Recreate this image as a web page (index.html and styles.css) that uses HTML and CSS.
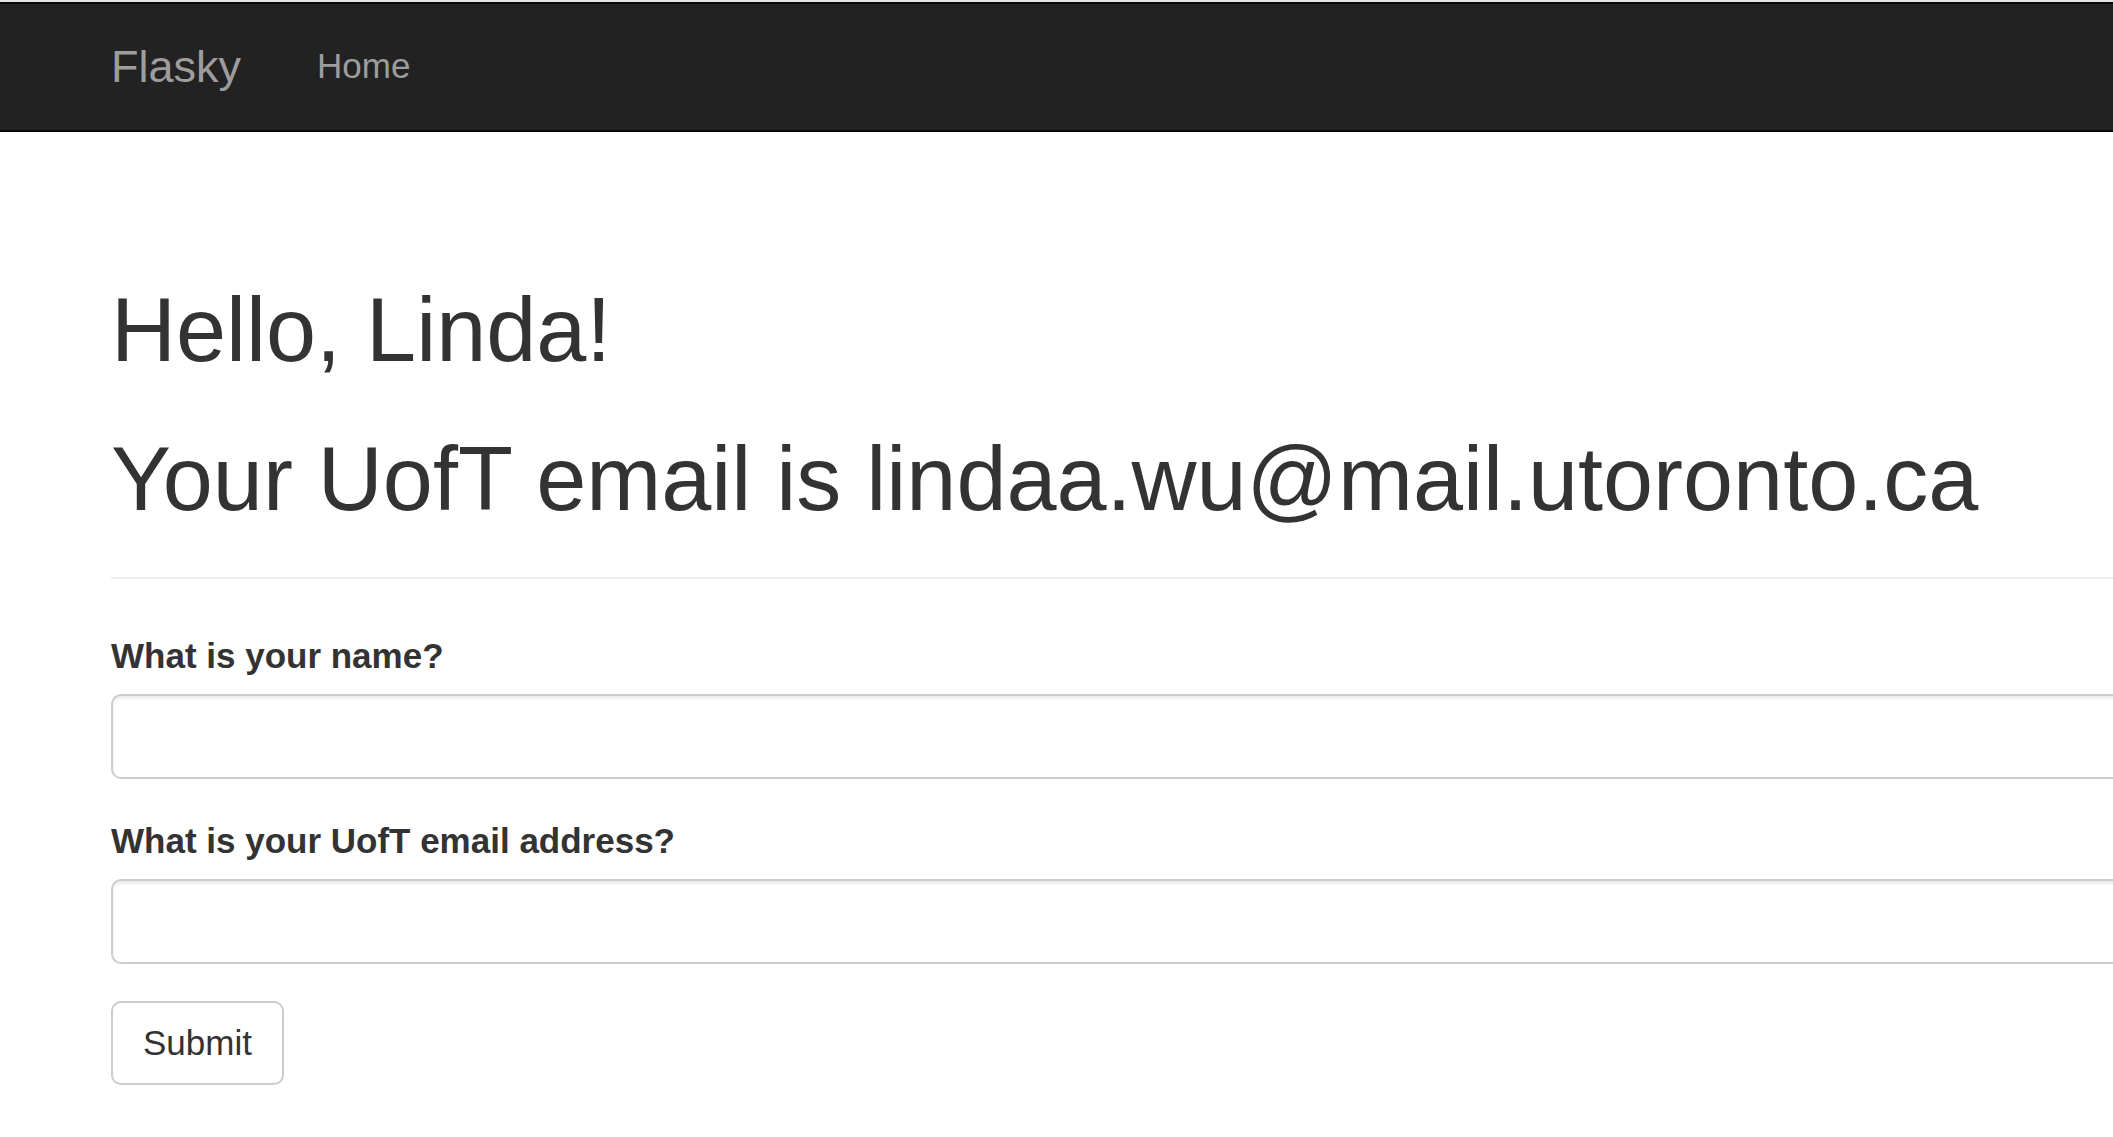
FILE: index.html
```html
<!DOCTYPE html>
<html lang="en">
<head>
<meta charset="utf-8">
<title>Flasky</title>
<link rel="stylesheet" href="styles.css">
</head>
<body>
<nav class="navbar">
  <a class="brand" href="#">Flasky</a>
  <a class="nav-link" href="#">Home</a>
</nav>
<main class="container">
  <div class="content">
    <div class="page-header">
      <h1 class="title">Hello, Linda!</h1>
      <h1 class="title second">Your UofT email is lindaa.wu@mail.utoronto.ca</h1>
    </div>
    <form class="form">
      <div class="form-group">
        <label class="label" for="name">What is your name?</label>
        <input class="input" id="name" type="text">
      </div>
      <div class="form-group">
        <label class="label" for="email">What is your UofT email address?</label>
        <input class="input" id="email" type="text">
      </div>
      <button class="btn" type="button">Submit</button>
    </form>
  </div>
</main>
</body>
</html>
```

FILE: styles.css
```css
html, body {
  margin: 0;
  padding: 0;
  overflow: hidden;
}
body {
  border-top: 2px solid #e4e4e4;
  background: #fff;
  font-family: "Liberation Sans", Arial, sans-serif;
  color: #333;
}
.navbar {
  display: flex;
  align-items: flex-start;
  height: 126px;
  background: #222;
  border-top: 2px solid #080808;
  border-bottom: 2px solid #080808;
  padding-left: 111px;
}
.brand {
  font-size: 45px;
  line-height: 126px;
  height: 126px;
  color: #9d9d9d;
  text-decoration: none;
}
.nav-link {
  margin-left: 76px;
  font-size: 35px;
  line-height: 124px;
  height: 126px;
  color: #9d9d9d;
  text-decoration: none;
}
.container {
  padding-left: 111px;
  overflow: hidden;
}
.content {
  width: 2200px;
}
.page-header {
  margin-top: 149px;
  padding-bottom: 48px;
  border-bottom: 2px solid #eee;
}
.title {
  margin: 0;
  font-size: 90px;
  line-height: 99px;
  font-weight: normal;
  color: #333;
}
.second {
  margin-top: 50px;
}
.form {
  padding-top: 52px;
}
.form-group {
  margin-bottom: 37px;
}
.label {
  display: block;
  font-size: 35px;
  line-height: 50px;
  font-weight: bold;
  color: #333;
  margin-bottom: 13px;
}
.input {
  display: block;
  box-sizing: border-box;
  width: 100%;
  height: 85px;
  margin: 0;
  border: 2px solid #ccc;
  border-radius: 10px;
  background: #fff;
  box-shadow: inset 0 3px 3px rgba(0, 0, 0, 0.075);
  font-size: 35px;
  font-family: inherit;
}
.btn {
  display: block;
  box-sizing: border-box;
  height: 84px;
  padding: 0 30px;
  border: 2px solid #ccc;
  border-radius: 10px;
  background: #fff;
  font-family: inherit;
  font-size: 35px;
  line-height: 50px;
  color: #333;
}
```
